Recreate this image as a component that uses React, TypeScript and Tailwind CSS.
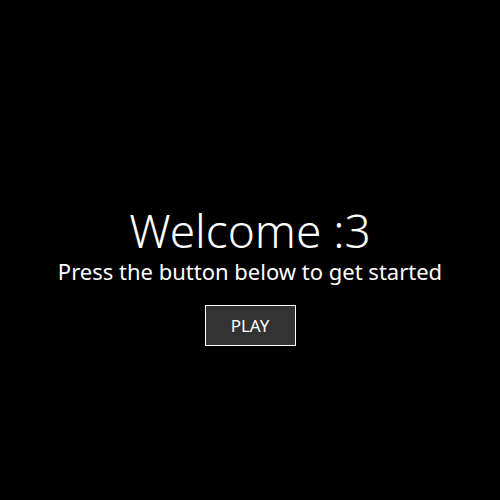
export default function App() {
  return (
    <div className="w-[500px] h-[500px] bg-black flex flex-col items-center pt-[205px] text-white font-['Noto_Sans',sans-serif]">
      <h1 className="text-[46px] leading-[50px] font-light">Welcome :3</h1>
      <p className="text-[22px] leading-[32px]">Press the button below to get started</p>
      <button className="mt-[18px] w-[91px] h-[41px] bg-[#333333] border border-white text-[17px]">
        PLAY
      </button>
    </div>
  );
}
